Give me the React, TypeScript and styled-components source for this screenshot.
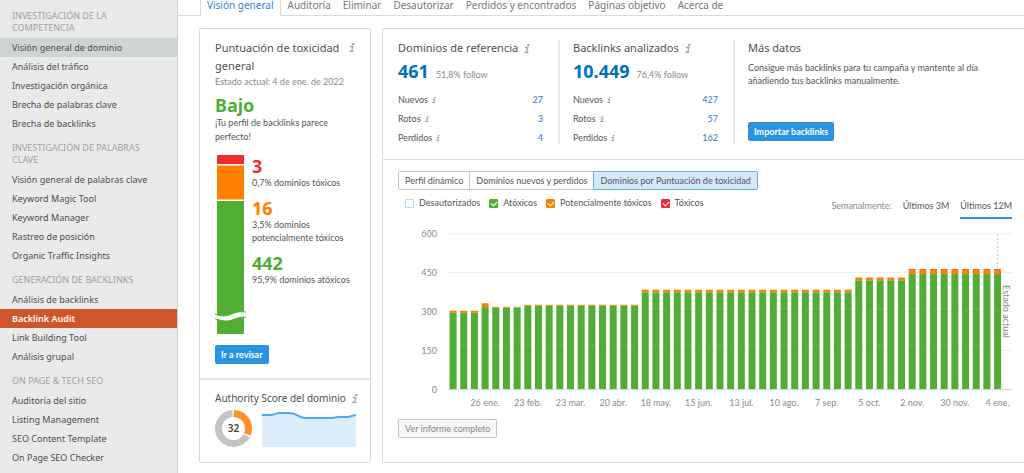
import React from "react";
import styled, { createGlobalStyle } from "styled-components";

const GREEN = "#4fae33";
const ORANGE = "#ff8000";
const RED = "#ee2b2e";
const BLUE = "#2b94e1";
const LINE = "#d9dbdc";
const UI = `"Noto Sans", "Open Sans", sans-serif`;
const SMALL = `Lato, "Noto Sans", sans-serif`;

const GlobalStyle = createGlobalStyle`
  * { box-sizing: border-box; }
  body { margin: 0; background: #fff; color: #555; font: 9px/13px ${SMALL}; }
  h2, h3, p, ul, dl, dd, dt, fieldset { margin: 0; padding: 0; border: 0; font-weight: 400; }
  ul { list-style: none; }
  button { font: inherit; cursor: pointer; }
  a { color: inherit; text-decoration: none; }
`;

const Page = styled.div`
  display: flex;
  min-height: 100vh;
`;

const Sidebar = styled.nav`
  flex: 0 0 178px;
  padding: 1px 0 6px;
  background: #eaeaea;
  border-right: 1px solid #cfcfcf;
  font-family: ${UI};
`;

const GroupTitle = styled.h2`
  padding: 9px 30px 4px 12px;
  font-size: 9px;
  line-height: 12px;
  color: #a0a0a0;
  text-transform: uppercase;
`;

const NavLink = styled.a<{ $state?: "open" | "current" }>`
  display: block;
  padding-left: 12px;
  line-height: 19px;
  color: ${(p) => (p.$state === "current" ? "#fff" : "#4d4d4d")};
  background: ${(p) => (p.$state === "current" ? "#d1552b" : p.$state === "open" ? "#cfd4d4" : "none")};
  font-weight: ${(p) => (p.$state === "current" ? 600 : 400)};
`;

const Main = styled.main`
  flex: 1;
  min-width: 0;
`;

const Tabs = styled.nav`
  display: flex;
  height: 16px;
  padding-left: 22px;
  border-bottom: 1px solid ${LINE};
  font: 10px/10px ${UI};
`;

const Tab = styled.a<{ $active?: boolean }>`
  height: ${(p) => (p.$active ? 16 : 15)}px;
  padding: 0 6px;
  background: #fff;
  color: ${(p) => (p.$active ? "#2c86cf" : "#777")};
  border: solid ${LINE};
  border-width: ${(p) => (p.$active ? "0 1px" : "0")};
  margin-right: ${(p) => (p.$active ? 1 : 0)}px;
  white-space: nowrap;
`;

const Columns = styled.div`
  display: grid;
  grid-template-columns: 172px minmax(0, 1fr);
  gap: 11px;
  padding: 12px 0 11px 21px;
`;

const Card = styled.section`
  border: 1px solid ${LINE};
  border-radius: 2px;
`;

const WideCard = styled(Card)`
  border-right: 0;
  border-radius: 2px 0 0 2px;
`;

const Toxicity = styled.div`
  padding: 10px 15px 14px;
  border-bottom: 2px solid #e6e6e6;
`;

const Authority = styled.div`
  padding: 10px 14px 15px 15px;
`;

const TitleRow = styled.div`
  display: flex;
  gap: 6px;
`;

const Title = styled.h3<{ $compact?: boolean; $tall?: boolean }>`
  font: ${(p) => (p.$compact ? 10 : 11)}px/${(p) => (p.$tall ? 18 : 16)}px ${UI};
  white-space: ${(p) => (p.$tall ? "normal" : "nowrap")};
  color: #505050;
`;

const InfoButton = styled.button<{ $small?: boolean }>`
  display: flex;
  flex: none;
  align-items: center;
  height: ${(p) => (p.$small ? 12 : 17)}px;
  padding: 0;
  border: 0;
  background: none;
  color: ${(p) => (p.$small ? "#999fa3" : "#a0a6a9")};
  svg {
    width: ${(p) => (p.$small ? 4 : 6)}px;
    height: ${(p) => (p.$small ? 6 : 9)}px;
  }
`;

const Muted = styled.p`
  line-height: 14px;
  color: #8a8a8a;
`;

const Verdict = styled.p`
  margin-top: 6px;
  font: 700 18px/20px ${UI};
  color: ${GREEN};
`;

const VerdictText = styled.p`
  margin-top: 1px;
  line-height: 14px;
`;

const Breakdown = styled.div`
  display: flex;
  gap: 6px;
  margin: 11px 0;
  svg { flex: none; }
`;

const BreakdownList = styled.ul`
  display: flex;
  flex-direction: column;
  gap: 9px;
  padding-top: 1px;
`;

const Count = styled.strong<{ $color: string }>`
  display: block;
  font: 700 18px/20px ${UI};
  color: ${(p) => p.$color};
`;

const PrimaryButton = styled.button`
  display: block;
  height: 19px;
  padding: 0 6px;
  border: 0;
  border-radius: 2px;
  background: ${BLUE};
  color: #fff;
  font-weight: 700;
`;

const AuthorityRow = styled.div`
  display: flex;
  gap: 10px;
  margin-top: 3px;
`;

const Trend = styled.svg`
  flex: 1;
  min-width: 0;
  height: 37px;
`;

const Stats = styled.div`
  display: flex;
  padding: 11px 0 15px 15px;
  border-bottom: 1px solid ${LINE};
`;

const Stat = styled.div`
  flex: 0 0 162px;
  margin-right: 13px;
  padding-right: 15px;
  border-right: 2px solid #e6e8e9;
`;

const Headline = styled.p`
  display: flex;
  align-items: baseline;
  gap: 7px;
  margin: 4px 0 13px;
  height: 20px;
  color: #8a8a8a;
  strong { font: 700 18px/20px ${UI}; color: #0071bc; }
`;

const StatList = styled.dl`
  display: grid;
  grid-template-columns: 1fr auto;
  row-gap: 7px;
  line-height: 12px;
  dt { display: flex; gap: 4px; }
  dd { color: #2c80c8; text-align: right; }
`;

const More = styled.div`
  flex: 1;
  p { max-width: 240px; margin: 5px 0 35px; }
`;

const ChartSection = styled.div`
  padding: 11px 12px 23px 15px;
`;

const Segments = styled.div`
  display: flex;
`;

const Segment = styled.button<{ $active?: boolean }>`
  height: 19px;
  padding: 0 6px;
  margin-right: -1px;
  border: 1px solid ${(p) => (p.$active ? "#62b3ec" : "#c3c7c9")};
  background: ${(p) => (p.$active ? "#d3e8f8" : "#fff")};
  color: #555;
  white-space: nowrap;
  &:first-child { border-radius: 2px 0 0 2px; }
  &:last-child { border-radius: 0 2px 2px 0; }
`;

const Controls = styled.div`
  display: flex;
  justify-content: space-between;
  align-items: flex-start;
  padding: 7px 0 6px;
`;

const Legend = styled.fieldset`
  display: flex;
  gap: 9px;
  padding-left: 7px;
  line-height: 12px;
`;

const LegendItem = styled.label`
  display: flex;
  align-items: center;
  gap: 5px;
  white-space: nowrap;
`;

const Tick = styled.input<{ $color: string }>`
  appearance: none;
  position: relative;
  width: 9px;
  height: 9px;
  margin: 0;
  border: 1px solid #b5dbf5;
  border-radius: 1px;
  &:checked { background: ${(p) => p.$color}; border-color: ${(p) => p.$color}; }
  &:checked::after {
    content: "";
    position: absolute;
    left: 1px;
    top: 1px;
    width: 5px;
    height: 3px;
    border: solid #fff;
    border-width: 0 0 1px 1px;
    transform: rotate(-45deg);
  }
`;

const Ranges = styled.div`
  display: flex;
  gap: 11px;
  line-height: 18px;
  color: #8a8a8a;
`;

const Range = styled.button<{ $active?: boolean }>`
  height: 22px;
  padding: 0 0 2px;
  border: 0;
  border-bottom: 2px solid ${(p) => (p.$active ? BLUE : "transparent")};
  background: none;
  color: #555;
`;

const Plot = styled.div`
  padding-left: 50px;
`;

const PlotSvg = styled.svg`
  display: block;
  width: 100%;
  height: 187px;
  overflow: visible;
  font: 9px ${SMALL};
  fill: #8a8a8a;
`;

const ReportButton = styled.button`
  display: block;
  height: 19px;
  margin-top: 7px;
  padding: 0 6px;
  border: 1px solid #c3c7c9;
  border-radius: 2px;
  background: #f5f7f8;
  color: #888;
`;

type Item = { label: string; state?: "open" | "current" };
const groups: { title: string; items: Item[] }[] = [
  {
    title: "Investigación de la competencia",
    items: [
      { label: "Visión general de dominio", state: "open" },
      { label: "Análisis del tráfico" },
      { label: "Investigación orgánica" },
      { label: "Brecha de palabras clave" },
      { label: "Brecha de backlinks" },
    ],
  },
  {
    title: "Investigación de palabras clave",
    items: [
      { label: "Visión general de palabras clave" },
      { label: "Keyword Magic Tool" },
      { label: "Keyword Manager" },
      { label: "Rastreo de posición" },
      { label: "Organic Traffic Insights" },
    ],
  },
  {
    title: "Generación de backlinks",
    items: [
      { label: "Análisis de backlinks" },
      { label: "Backlink Audit", state: "current" },
      { label: "Link Building Tool" },
      { label: "Análisis grupal" },
    ],
  },
  {
    title: "On page & tech SEO",
    items: [
      { label: "Auditoría del sitio" },
      { label: "Listing Management" },
      { label: "SEO Content Template" },
      { label: "On Page SEO Checker" },
    ],
  },
];

const tabs = ["Visión general", "Auditoría", "Eliminar", "Desautorizar", "Perdidos y encontrados", "Páginas objetivo", "Acerca de"];

const stats = [
  { title: "Dominios de referencia", total: "461", follow: "51,8% follow", rows: [["Nuevos", "27"], ["Rotos", "3"], ["Perdidos", "4"]] },
  { title: "Backlinks analizados", total: "10.449", follow: "76,4% follow", rows: [["Nuevos", "427"], ["Rotos", "57"], ["Perdidos", "162"]] },
];

const breakdown = [
  { count: "3", color: RED, text: "0,7% dominios tóxicos" },
  { count: "16", color: ORANGE, text: "3,5% dominios potencialmente tóxicos" },
  { count: "442", color: GREEN, text: "95,9% dominios atóxicos" },
];

const legend = [
  { label: "Desautorizados", color: "#b5dbf5", on: false },
  { label: "Atóxicos", color: GREEN, on: true },
  { label: "Potencialmente tóxicos", color: ORANGE, on: true },
  { label: "Tóxicos", color: RED, on: true },
];

// Runs of weeks that share the same counts.
const runs = [
  { weeks: 3, ok: 293, risky: 8, toxic: 0 },
  { weeks: 1, ok: 315, risky: 15, toxic: 0 },
  { weeks: 3, ok: 314, risky: 2, toxic: 0 },
  { weeks: 11, ok: 320, risky: 4, toxic: 0 },
  { weeks: 20, ok: 372, risky: 10, toxic: 0 },
  { weeks: 5, ok: 418, risky: 11, toxic: 0 },
  { weeks: 9, ok: 442, risky: 16, toxic: 3 },
];
const weeks = runs.flatMap((r) => Array.from({ length: r.weeks }, () => r));
const dates = ["26 ene.", "23 feb.", "23 mar.", "20 abr.", "18 may.", "15 jun.", "13 jul.", "10 ago.", "7 sep.", "5 oct.", "2 nov.", "30 nov.", "4 ene."];

const BASE = 164;
const UNIT = 156 / 600;
const BAR = 1.24;
const center = (i: number) => 0.9 + i * 1.893;

const Info = ({ small, about }: { small?: boolean; about: string }) => (
  <InfoButton $small={small} type="button" aria-label={`Información: ${about}`}>
    <svg viewBox="0 0 6 9" fill="none" stroke="currentColor" aria-hidden="true">
      <path d="M3.4 0h2.2l-.4 2H3z" fill="currentColor" stroke="none" />
      <path d="M1 3.500h2.8L2.700 8M.3 8.300h4.200" strokeWidth={small ? 1.6 : 1.3} />
    </svg>
  </InfoButton>
);

const ToxicityBar = () => (
  <svg width="31" height="179" viewBox="0 0 31 179" aria-hidden="true">
    <path d="M2 9V1q0-1 1-1h25q1 0 1 1v8z" fill={RED} />
    <rect x="2" y="10.5" width="27" height="34" fill={ORANGE} />
    <path d="M2 46h27v132q0 1-1 1H3q-1 0-1-1z" fill={GREEN} />
    <path d="M0 159C10 163 13 160 19 158S27 157 31 157V162C25 162 22 163 17 165S6 166 0 163z" fill="#fff" />
    <path d="M0 159C10 163 13 160 19 158S27 157 31 157M0 163.500C6 166 12 167 17 165S25 162 31 162" fill="none" stroke={GREEN} />
  </svg>
);

const Donut = () => (
  <svg width="37" height="37" viewBox="0 0 37 37" role="img" aria-label="32">
    <circle cx="18.5" cy="18.5" r="15" fill="none" stroke="#c4c4c4" strokeWidth="7" />
    <circle cx="18.5" cy="18.5" r="15" fill="none" stroke="#fff" strokeWidth="7" pathLength="100" strokeDasharray="34 66" strokeDashoffset="1" transform="rotate(-90 18.5 18.5)" />
    <circle cx="18.5" cy="18.5" r="15" fill="none" stroke="#ff8f27" strokeWidth="7" pathLength="100" strokeDasharray="31 69" transform="rotate(-89 18.5 18.5)" />
    <text x="18.5" y="22" textAnchor="middle" fontFamily="Noto Sans" fontSize="10" fontWeight="600" fill="#444">32</text>
  </svg>
);

const Chart = () => (
  <Plot>
    <PlotSvg>
      {[0, 150, 300, 450, 600].map((v) => (
        <g key={v}>
          <rect x="0" y={BASE - v * UNIT} width="100%" height="1" fill={v ? "#eceeef" : "#d3d6d8"} />
          <text x="-11" y={BASE - v * UNIT + 4} textAnchor="end">{v}</text>
        </g>
      ))}
      <line x1={`${center(51)}%`} x2={`${center(51)}%`} y1="9" y2="44" stroke="#c9c9c9" strokeDasharray="2 2" />
      {weeks.map((w, i) => {
        const x = `${center(i) - BAR / 2}%`;
        const okTop = BASE - w.ok * UNIT;
        const riskyTop = okTop - w.risky * UNIT;
        return (
          <g key={i}>
            <rect x={x} y={okTop} width={`${BAR}%`} height={w.ok * UNIT} fill={GREEN} />
            <rect x={x} y={riskyTop} width={`${BAR}%`} height={w.risky * UNIT} fill={ORANGE} />
            <rect x={x} y={riskyTop - w.toxic * UNIT} width={`${BAR}%`} height={w.toxic * UNIT} fill={RED} />
          </g>
        );
      })}
      {dates.map((d, i) => (
        <text key={d} x={`${center(3 + i * 4)}%`} y="181" textAnchor="middle">{d}</text>
      ))}
      <text x="99%" y="60" writingMode="vertical-rl">Estado actual</text>
    </PlotSvg>
  </Plot>
);

export default function App() {
  return (
    <Page>
      <GlobalStyle />
      <Sidebar>
        {groups.map((g) => (
          <div key={g.title}>
            <GroupTitle>{g.title}</GroupTitle>
            <ul>
              {g.items.map((it) => (
                <li key={it.label}><NavLink href="#" $state={it.state}>{it.label}</NavLink></li>
              ))}
            </ul>
          </div>
        ))}
      </Sidebar>
      <Main>
        <Tabs>
          {tabs.map((t, i) => <Tab key={t} href="#" $active={i === 0}>{t}</Tab>)}
        </Tabs>
        <Columns>
          <Card>
            <Toxicity>
              <TitleRow>
                <Title $tall>Puntuación de toxicidad general</Title>
                <Info about="toxicidad" />
              </TitleRow>
              <Muted>Estado actual: 4 de ene. de 2022</Muted>
              <Verdict>Bajo</Verdict>
              <VerdictText>¡Tu perfil de backlinks parece perfecto!</VerdictText>
              <Breakdown>
                <ToxicityBar />
                <BreakdownList>
                  {breakdown.map((b) => (
                    <li key={b.count}><Count $color={b.color}>{b.count}</Count>{b.text}</li>
                  ))}
                </BreakdownList>
              </Breakdown>
              <PrimaryButton type="button">Ir a revisar</PrimaryButton>
            </Toxicity>
            <Authority>
              <TitleRow>
                <Title $compact>Authority Score del dominio</Title>
                <Info about="Authority Score" />
              </TitleRow>
              <AuthorityRow>
                <Donut />
                <Trend viewBox="0 0 95 37" preserveAspectRatio="none" aria-hidden="true">
                  <path d="M0 5H10L17 3H27L35 4L43 8H70L77 7H88L95 5V37H0z" fill="#dceefc" />
                  <path d="M0 5H9C12 5 14 3 18 3H27C36 3 38 8 43 8H70L77 7H86C90 7 92 5 95 5" fill="none" stroke="#4aaaf0" strokeWidth="2" />
                </Trend>
              </AuthorityRow>
            </Authority>
          </Card>
          <WideCard>
            <Stats>
              {stats.map((s) => (
                <Stat key={s.title}>
                  <TitleRow>
                    <Title>{s.title}</Title>
                    <Info about={s.title} />
                  </TitleRow>
                  <Headline><strong>{s.total}</strong>{s.follow}</Headline>
                  <StatList>
                    {s.rows.map(([k, v]) => (
                      <React.Fragment key={k}>
                        <dt>{k}<Info small about={k} /></dt>
                        <dd><a href="#">{v}</a></dd>
                      </React.Fragment>
                    ))}
                  </StatList>
                </Stat>
              ))}
              <More>
                <Title>Más datos</Title>
                <p>Consigue más backlinks para tu campaña y mantente al día añadiendo tus backlinks manualmente.</p>
                <PrimaryButton type="button">Importar backlinks</PrimaryButton>
              </More>
            </Stats>
            <ChartSection>
              <Segments>
                <Segment type="button">Perfil dinámico</Segment>
                <Segment type="button">Dominios nuevos y perdidos</Segment>
                <Segment type="button" $active>Dominios por Puntuación de toxicidad</Segment>
              </Segments>
              <Controls>
                <Legend>
                  {legend.map((l) => (
                    <LegendItem key={l.label}>
                      <Tick type="checkbox" $color={l.color} defaultChecked={l.on} />
                      {l.label}
                    </LegendItem>
                  ))}
                </Legend>
                <Ranges>
                  <span>Semanalmente:</span>
                  <Range type="button">Últimos 3M</Range>
                  <Range type="button" $active>Últimos 12M</Range>
                </Ranges>
              </Controls>
              <Chart />
              <ReportButton type="button">Ver informe completo</ReportButton>
            </ChartSection>
          </WideCard>
        </Columns>
      </Main>
    </Page>
  );
}
